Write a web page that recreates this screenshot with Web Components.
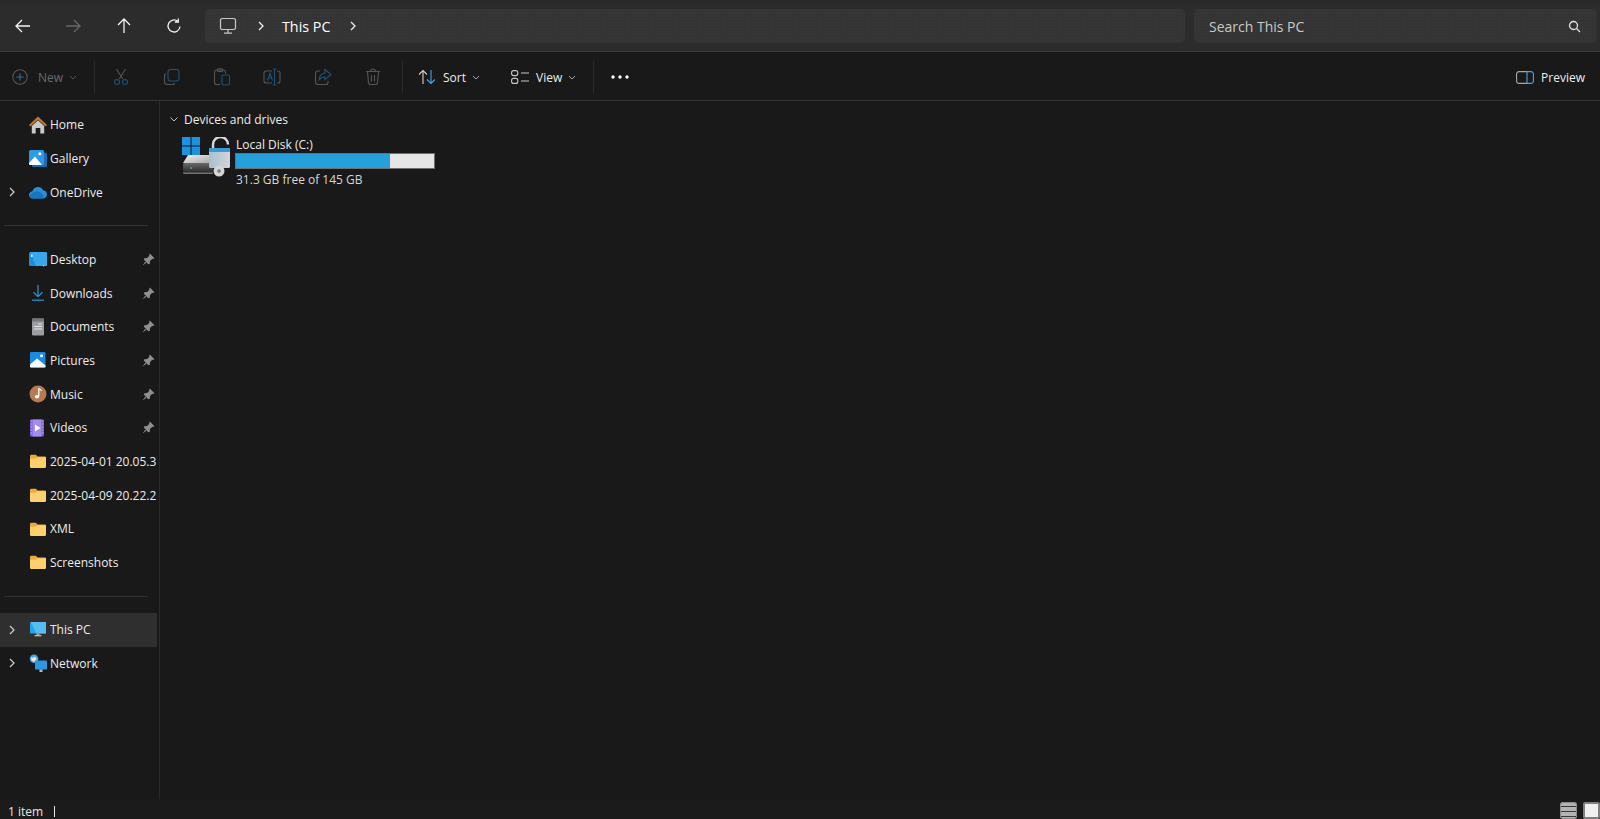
<!DOCTYPE html>
<html>
<head>
<meta charset="utf-8">
<title>This PC</title>
<style>
  html, body { margin: 0; height: 100%; background: #191919; overflow: hidden; }
  body { font-family: "Open Sans", "Noto Sans", sans-serif; color: #fff; }
</style>
</head>
<body>
<explorer-window>
  <explorer-addressbar slot="top"></explorer-addressbar>
  <explorer-toolbar slot="tools"></explorer-toolbar>
  <explorer-sidebar slot="side">
    <nav-item icon="home">Home</nav-item>
    <nav-item icon="gallery">Gallery</nav-item>
    <nav-item icon="onedrive" expand>OneDrive</nav-item>
    <nav-divider></nav-divider>
    <nav-item icon="desktop" pin>Desktop</nav-item>
    <nav-item icon="downloads" pin>Downloads</nav-item>
    <nav-item icon="documents" pin>Documents</nav-item>
    <nav-item icon="pictures" pin>Pictures</nav-item>
    <nav-item icon="music" pin>Music</nav-item>
    <nav-item icon="videos" pin>Videos</nav-item>
    <nav-item icon="folder">2025-04-01 20.05.3</nav-item>
    <nav-item icon="folder">2025-04-09 20.22.2</nav-item>
    <nav-item icon="folder">XML</nav-item>
    <nav-item icon="folder">Screenshots</nav-item>
    <nav-divider></nav-divider>
    <nav-item icon="pc" expand selected>This PC</nav-item>
    <nav-item icon="network" expand>Network</nav-item>
  </explorer-sidebar>
  <drive-list slot="main">
    <drive-tile name="Local Disk (C:)" free="31.3 GB free of 145 GB" used="78"></drive-tile>
  </drive-list>
  <explorer-status slot="status"></explorer-status>
</explorer-window>

<script>
const NAV_ICONS = {
  home: `<path d="M9 .5 0 9l1.300 1.500L9 3.500l7.700 7L18 9z" fill="#c87a2c"/><path d="M2.800 10 9 4.200l6.200 5.800v7.500h-3.900v-5.500H6.700v5.500H2.800z" fill="#c9c9c9"/>`,
  gallery: `<rect x="3" y="3.500" width="15" height="14.500" rx="1.500" fill="#1b6cb5"/><rect x="0" y="1" width="15" height="15" rx="1.500" fill="#2b9be8"/><path d="M0 14l6-6.500 7 8.500H1.500A1.500 1.500 0 0 1 0 14.500z" fill="#fff"/><circle cx="10.800" cy="4.800" r="1.500" fill="#fff"/>`,
  onedrive: `<path d="M4.200 15.500C1.500 15.500 0 13.700 0 12c0-1.900 1.400-3.300 3.200-3.500C4 5.800 6.300 4 9 4c2.300 0 4.100 1.200 5 3.200 2.300.2 4 1.900 4 4.100 0 2.400-1.800 4.200-4.200 4.200z" fill="#2b8fd8"/><path d="M5 9c2-1.200 5-1.200 7 1l2 1.800c1 .9.500 3.700-.2 3.700H4.200c-2 0-3.200-.8-3.800-2C1.500 11 3 10 5 9z" fill="#1a73bd"/>`,
  desktop: `<rect x="0" y="2" width="18" height="14" rx="1.500" fill="#1f8fdc"/><path d="M1.500 2H16.500A1.500 1.500 0 0 1 18 3.500V16H7z" fill="#37a8ec"/><rect x="2" y="4.500" width="1.500" height="2.500" fill="#dff2ff"/><rect x="14" y="15" width="1" height="1.500" fill="#bbb"/>`,
  downloads: `<path d="M9 1v11.500M4.500 8.200 9 12.700l4.500-4.500" fill="none" stroke="#2a8ed0" stroke-width="1.300"/><path d="M3 16.200h12" stroke="#2a8ed0" stroke-width="1.300"/>`,
  documents: `<rect x="3" y="0.500" width="12" height="17" rx="1.200" fill="#9a9da2"/><path d="M3 4.500a1 1 0 0 1 1-1h10a1 1 0 0 1 1 1v-3a1 1 0 0 0-1-1H4a1 1 0 0 0-1 1z" fill="#777"/><path d="M9 6h4M5 8.500h8M5 11h8" stroke="#e8e8e8" stroke-width="1"/>`,
  pictures: `<rect x="1" y="1" width="15.500" height="15.500" rx="1.300" fill="#1d8ae0"/><path d="M1 13.500 8 7.500l8.500 7v.8a1.200 1.200 0 0 1-1.200 1.200H2.200A1.200 1.200 0 0 1 1 15.300z" fill="#fff"/><circle cx="12.500" cy="4.800" r="1.500" fill="#fff"/>`,
  music: `<circle cx="9" cy="9" r="8.500" fill="#b67a52"/><path d="M9.800 3.500v7.800" stroke="#fff" stroke-width="1.300"/><path d="M9.800 3.500c1.500.4 2.400 1.200 2.500 2.500" stroke="#fff" stroke-width="1.200" fill="none"/><ellipse cx="8" cy="11.700" rx="2.200" ry="1.800" fill="#fff"/>`,
  videos: `<rect x="1" y="0.500" width="14" height="17" rx="1" fill="#7a5cd6"/><rect x="3.500" y="0.500" width="9" height="17" fill="#a48cec"/><path d="M6 5.500 11.500 9 6 12.500z" fill="#fff"/><path d="M1.800 2h1M1.800 5h1M1.800 8h1M1.800 11h1M1.800 14h1M13.200 2h1M13.200 5h1M13.200 8h1M13.200 11h1M13.200 14h1" stroke="#ddd" stroke-width="1"/>`,
  folder: `<path d="M1 4a1.300 1.300 0 0 1 1.300-1.300h4.500L8.500 4.500h7.200A1.300 1.300 0 0 1 17 5.800V8H1z" fill="#eda93a"/><path d="M1 6.800 7 6.500l1.500-1.200h8.500V14.700a1.300 1.300 0 0 1-1.300 1.300H2.300A1.300 1.300 0 0 1 1 14.700z" fill="#fdd06f"/>`,
  pc: `<rect x="1" y="1" width="16" height="11.500" rx="1" fill="#27a3e8"/><path d="M2 1h14a1 1 0 0 1 1 1v10.500H7z" fill="#55bdf2"/><path d="M7.500 12.500h3v2h-3z" fill="#9aa0a6"/><path d="M5.500 14.700h7" stroke="#c8c8c8" stroke-width="1.200"/>`,
  network: `<circle cx="5" cy="4.800" r="4.300" fill="#4aa3d8"/><path d="M2 3c1.500 1 3 .8 4-.5L7.800 5 5 8 2.500 6.500z" fill="#e6e6e6"/><rect x="6" y="6.500" width="12" height="9" rx="1" fill="#2a9ae0"/><path d="M10.500 15.500h3V18h-3z" fill="#b9bec4"/>`
};

class ExplorerWindow extends HTMLElement {
  constructor() {
    super();
    this.attachShadow({ mode: "open" }).innerHTML = `
      <style>
        :host { display: flex; flex-direction: column; width: 1600px; height: 819px; overflow: hidden; }
        .body { flex: 1; display: flex; min-height: 0; }
        ::slotted([slot="main"]) { flex: 1; }
      </style>
      <slot name="top"></slot>
      <slot name="tools"></slot>
      <div class="body"><slot name="side"></slot><slot name="main"></slot></div>
      <slot name="status"></slot>`;
  }
}

class ExplorerAddressbar extends HTMLElement {
  constructor() {
    super();
    this.attachShadow({ mode: "open" }).innerHTML = `
      <style>
        :host { display: flex; align-items: center; height: 50px; padding: 1px 3px 0 0; border-bottom: 1px solid #3c3c3c;
          background: linear-gradient(#272727, #2c2c2c 12%, #2c2c2c); }
        .nav { display: grid; grid-template-columns: repeat(4, 50.3px); width: 205px; box-sizing: border-box; justify-items: center; margin-left: -2px; margin-right: 2px; }
        svg { display: block; }
        .field { height: 34px; border-radius: 5px; display: flex; align-items: center; box-sizing: border-box;
          background-color: #343434;
          background-image: radial-gradient(circle, #3b3b3b 0.6px, transparent 0.8px); background-size: 3px 3px; }
        .path { flex: 1; padding-left: 14px; margin-right: 9px; }
        .search { width: 403px; padding: 0 16px 0 15px; justify-content: space-between; color: #c9c9c9; }
        .crumb { font-size: 14.300px; color: #fff; margin: 0 19px 0 17px; }
      </style>
      <div class="nav">
        <svg width="18" height="18" viewBox="0 0 18 18" fill="none" stroke="#f2f2f2" stroke-width="1.300"><path d="M16 9H2.500M8 3 2 9l6 6"/></svg>
        <svg width="18" height="18" viewBox="0 0 18 18" fill="none" stroke="#686868" stroke-width="1.300"><path d="M2 9h13.500M10 3l6 6-6 6"/></svg>
        <svg width="18" height="18" viewBox="0 0 18 18" fill="none" stroke="#f2f2f2" stroke-width="1.300"><path d="M9 16V2.500M3 8l6-6 6 6"/></svg>
        <svg width="18" height="18" viewBox="0 0 18 18" fill="none" stroke="#f2f2f2" stroke-width="1.300"><path d="M15 9.500A6 6 0 1 1 12.800 4.300M13.300 1.500v3.500H9.800"/></svg>
      </div>
      <div class="field path">
        <svg width="18" height="18" viewBox="0 0 18 18" fill="none" stroke="#c8c8c8" stroke-width="1.200"><rect x="1.500" y="1.500" width="15" height="11" rx="1.800"/><path d="M9 12.500v3.500M5 16.200h8"/></svg>
        <svg style="margin-left:20px" width="8" height="10" viewBox="0 0 8 10" fill="none" stroke="#eee" stroke-width="1.300"><path d="M2 1l4 4-4 4"/></svg>
        <span class="crumb">This PC</span>
        <svg width="8" height="10" viewBox="0 0 8 10" fill="none" stroke="#eee" stroke-width="1.300"><path d="M2 1l4 4-4 4"/></svg>
      </div>
      <div class="field search">
        <span style="font-size:14px">Search This PC</span>
        <svg width="13" height="13" viewBox="0 0 13 13" fill="none" stroke="#e0e0e0" stroke-width="1.300"><circle cx="5.500" cy="5.500" r="4"/><path d="M8.500 8.500l3.500 3.500"/></svg>
      </div>`;
  }
}

class ExplorerToolbar extends HTMLElement {
  constructor() {
    super();
    const g = "#555", b = "#1f5279";
    const chev = c => `<svg class="chev" width="8" height="5" viewBox="0 0 8 5" fill="none" stroke="${c}" stroke-width="1"><path d="M1 1l3 3 3-3"/></svg>`;
    this.attachShadow({ mode: "open" }).innerHTML = `
      <style>
        :host { display: flex; align-items: center; height: 46px; padding-top: 2px; background: #191919; border-bottom: 1px solid #363636; font-size: 12px; color: #ececec; }
        svg { display: block; flex: none; }
        .sep { width: 1px; height: 32px; background: #2a2a2a; flex: none; }
        .btn { display: flex; align-items: center; }
        .icons { display: grid; grid-template-columns: repeat(6, 50.400px); justify-items: center; width: 307px; padding-left: 1px; box-sizing: border-box; }
        .dim { color: #6a6a6a; }
        .spring { flex: 1; }
      </style>
      <div class="btn dim" style="padding-left:12px;box-sizing:border-box;width:94px">
        <svg width="16" height="16" viewBox="0 0 16 16" fill="none" stroke="${g}" stroke-width="1.100"><circle cx="8" cy="8" r="7.200"/><path d="M8 4.500v7M4.500 8h7" stroke="#2a6ea3"/></svg>
        <span style="margin:0 6px 0 10px">New</span>${chev(g)}
      </div>
      <div class="sep"></div>
      <div class="icons">
        <svg width="18" height="18" viewBox="0 0 18 18" fill="none" stroke="${g}" stroke-width="1.100"><path d="M4.500 1 10.800 11M13.500 1 7.200 11"/><circle cx="5" cy="14" r="2.500" stroke="${b}"/><circle cx="13" cy="14" r="2.500" stroke="${b}"/></svg>
        <svg width="18" height="18" viewBox="0 0 18 18" fill="none" stroke-width="1.100"><path d="M3 5.500A2 2 0 0 0 1.500 7.500v6a3 3 0 0 0 3 3h5a2 2 0 0 0 2-1.500" stroke="${g}"/><rect x="5" y="1.500" width="11" height="11.500" rx="2.500" stroke="${b}"/></svg>
        <svg width="18" height="18" viewBox="0 0 18 18" fill="none" stroke-width="1.100"><path d="M7 16.500H3.500a2 2 0 0 1-2-2V4a2 2 0 0 1 2-2h7a2 2 0 0 1 2 2v1.500" stroke="${g}"/><rect x="4.500" y="0.700" width="5" height="2.800" rx="1" stroke="${g}"/><rect x="9" y="7" width="7.500" height="10" rx="1.500" stroke="${b}"/></svg>
        <svg width="18" height="18" viewBox="0 0 18 18" fill="none" stroke-width="1.100"><path d="M9 3H3a2 2 0 0 0-2 2v8a2 2 0 0 0 2 2h6M14 3h1a2 2 0 0 1 2 2v8a2 2 0 0 1-2 2h-1" stroke="${g}"/><path d="M11.500 1v16M9.800 1h3.400M9.800 17h3.400M4.500 12.500 7 5.500 9.500 12.500M5.500 10h3" stroke="${b}"/></svg>
        <svg width="18" height="18" viewBox="0 0 18 18" fill="none" stroke-width="1.100"><path d="M6 3H3.500a2 2 0 0 0-2 2v9a2.500 2.500 0 0 0 2.500 2.500h8a2 2 0 0 0 2-2v-1.500" stroke="${g}"/><path d="M11 1.500 17 6.500l-6 5V9c-3 0-4.500 1-6 3 .3-4 2.500-6.500 6-7z" stroke="${b}"/></svg>
        <svg width="16" height="18" viewBox="0 0 16 18" fill="none" stroke="${g}" stroke-width="1.100"><path d="M1 3.500h14M5.500 3.500a2.500 2.500 0 0 1 5 0M2.500 3.500l1 11.500a2 2 0 0 0 2 1.500h5a2 2 0 0 0 2-1.500l1-11.500M6.500 7v6.500M9.500 7v6.500"/></svg>
      </div>
      <div class="sep"></div>
      <div class="btn" style="margin-left:15px">
        <svg width="18" height="16" viewBox="0 0 18 16" fill="none" stroke-width="1.100"><path d="M5 15V1.500M1 5.500l4-4 4 4" stroke="#d0d0d0"/><path d="M13 1v13.500M9 10.500l4 4 4-4" stroke="#45a5e8"/></svg>
        <span style="margin:0 6px 0 7px">Sort</span>${chev("#a0a0a0")}
      </div>
      <div class="btn" style="margin-left:31px">
        <svg width="18" height="14" viewBox="0 0 18 14" fill="none" stroke="#c8c8c8" stroke-width="1.100"><rect x="0.600" y="0.600" width="6.200" height="5" rx="2"/><rect x="0.600" y="8.400" width="6.200" height="5" rx="2"/><path d="M10 3h8M10 11h8"/></svg>
        <span style="margin:0 6px 0 7px">View</span>${chev("#a0a0a0")}
      </div>
      <div class="sep" style="margin-left:17px"></div>
      <svg style="margin-left:17px" width="18" height="4" viewBox="0 0 18 4" fill="#fff"><circle cx="2" cy="2" r="1.700"/><circle cx="9" cy="2" r="1.700"/><circle cx="16" cy="2" r="1.700"/></svg>
      <div class="spring"></div>
      <div class="btn" style="margin-right:15px">
        <svg width="18" height="13" viewBox="0 0 18 13" fill="none" stroke-width="1.100"><path d="M11 .6H3A2.400 2.400 0 0 0 .6 3v7A2.400 2.400 0 0 0 3 12.400h8" stroke="#a8a8a8"/><path d="M11 .6h4A2.400 2.400 0 0 1 17.400 3v7a2.400 2.400 0 0 1-2.400 2.400h-4z" stroke="#45a5e8"/></svg>
        <span style="margin-left:7px">Preview</span>
      </div>`;
  }
}

class ExplorerSidebar extends HTMLElement {
  constructor() {
    super();
    this.attachShadow({ mode: "open" }).innerHTML = `
      <style>
        :host { display: block; flex: none; width: 160px; box-sizing: border-box; padding: 7px 2px 0 0; border-right: 1px solid #2b2b2b; }
      </style>
      <slot></slot>`;
  }
}

class NavItem extends HTMLElement {
  constructor() {
    super();
    const icon = NAV_ICONS[this.getAttribute("icon")] || "";
    const expand = this.hasAttribute("expand");
    const pin = this.hasAttribute("pin");
    this.attachShadow({ mode: "open" }).innerHTML = `
      <style>
        :host { display: flex; align-items: center; height: 33.670px; font-size: 12px; color: #ececec; overflow: hidden; white-space: nowrap; }
        :host([selected]) { background: #2f2f2f; }
        .exp { width: 29px; flex: none; display: flex; justify-content: center; padding-right: 6px; box-sizing: border-box; }
        svg { display: block; flex: none; }
        .label { flex: 1; min-width: 0; margin-left: 3px; overflow: hidden; }
        .pin { margin-right: 2px; }
      </style>
      <span class="exp">${expand ? `<svg width="8" height="10" viewBox="0 0 8 10" fill="none" stroke="#c8c8c8" stroke-width="1.300"><path d="M2 1l4 4-4 4"/></svg>` : ""}</span>
      <svg width="18" height="18" viewBox="0 0 18 18">${icon}</svg>
      <span class="label"><slot></slot></span>
      ${pin ? `<svg class="pin" width="13" height="13" viewBox="0 0 12 12" fill="#8f8f8f"><path d="M7.200 .5 11.500 4.800 10.300 5.500 9.500 5.300 7.400 7.400 7.200 10 5.800 10.300 1.800 6.300 2.100 4.900 4.700 4.700 6.800 2.600 6.600 1.800z"/><path d="M3 8 .5 11.500 4 9z"/></svg>` : ""}`;
  }
}

class NavDivider extends HTMLElement {
  constructor() {
    super();
    this.attachShadow({ mode: "open" }).innerHTML = `
      <style>
        :host { display: flex; align-items: center; height: 33.670px; padding: 0 9px 0 4px; }
        div { height: 1px; width: 100%; background: #323232; }
      </style>
      <div></div>`;
  }
}

class DriveList extends HTMLElement {
  constructor() {
    super();
    this.attachShadow({ mode: "open" }).innerHTML = `
      <style>
        :host { display: block; padding: 9px 0 0 10px; font-size: 12px; color: #ececec; }
        header { display: flex; align-items: center; height: 18px; gap: 5px; }
        svg { display: block; }
      </style>
      <header>
        <svg width="8" height="5" viewBox="0 0 8 5" fill="none" stroke="#c0c0c0" stroke-width="1"><path d="M.5.500 4 4 7.500.5"/></svg>
        <span style="margin-left:1px">Devices and drives</span>
      </header>
      <slot></slot>`;
  }
}

class DriveTile extends HTMLElement {
  constructor() {
    super();
    const used = this.getAttribute("used");
    this.attachShadow({ mode: "open" }).innerHTML = `
      <style>
        :host { display: flex; padding: 8px 0 0 12px; gap: 3px; }
        svg { display: block; flex: none; margin-top: 1px; }
        .info { width: 200px; display: flex; flex-direction: column; }
        .name, .free { line-height: 17px; padding-left: 1px; white-space: nowrap; }
        .bar { height: 16px; background: #e6e6e6; border: 1px solid #6f6f6f; box-sizing: border-box; }
        .fill { height: 100%; background: #26a0da; }
        .free { margin-top: 2px; color: #d6d6d6; }
      </style>
      <svg width="50" height="40" viewBox="0 0 50 40">
        <defs>
          <linearGradient id="lk" x1="0" x2="1" y1="0" y2="0"><stop offset="0" stop-color="#a9c0d0"/><stop offset="1" stop-color="#d2d5d8"/></linearGradient>
          <linearGradient id="dr" x1="0" x2="0" y1="0" y2="1"><stop offset="0" stop-color="#6a6a6a"/><stop offset="0.8" stop-color="#2e2e2e"/><stop offset="1" stop-color="#8a8a8a"/></linearGradient>
          <linearGradient id="tp" x1="0" x2="1" y1="0" y2="1"><stop offset="0" stop-color="#f0f0f0"/><stop offset="1" stop-color="#a8a8a8"/></linearGradient>
        </defs>
        <path d="M6 18H30V26H1z" fill="url(#tp)"/>
        <rect x="1" y="26" width="30" height="11" rx="1.500" fill="url(#dr)"/>
        <circle cx="9" cy="31" r="1" fill="#4caf50"/>
        <path d="M0 0h8.500v8.500H0zM9.500 0H18v8.500H9.500zM0 9.500h8.500V18H0zM9.500 9.500H18V18H9.500z" fill="#1b93e2"/>
        <path d="M31 12V7.500a7.500 7.500 0 0 1 15 0" fill="none" stroke="#d5dadf" stroke-width="2.400"/>
        <rect x="27" y="11" width="21" height="20" rx="1.500" fill="url(#lk)"/>
        <rect x="27" y="11" width="21" height="4" rx="1" fill="#3a9ad6"/>
        <circle cx="37" cy="34" r="5.500" fill="#d5d5d5"/><circle cx="37" cy="34" r="1.800" fill="#777"/>
      </svg>
      <div class="info">
        <span class="name">${this.getAttribute("name")}</span>
        <div class="bar"><div class="fill" style="width:${used}%"></div></div>
        <span class="free">${this.getAttribute("free")}</span>
      </div>`;
  }
}

class ExplorerStatus extends HTMLElement {
  constructor() {
    super();
    this.attachShadow({ mode: "open" }).innerHTML = `
      <style>
        :host { display: flex; align-items: center; height: 20px; background: #1b1b1b; font-size: 12px; color: #e6e6e6; padding-left: 8px; }
        .txt { padding-top: 4px; }
        .caret { width: 1px; height: 11px; background: #e6e6e6; margin: 4px 0 0 11px; }
        .spring { flex: 1; }
        .view { width: 17px; height: 17px; box-sizing: border-box; border-radius: 2px; align-self: flex-end; }
        .detail { margin-right: 6px; background: #b3b3b3 repeating-linear-gradient(transparent 0 3px, #3a3a3a 3px 4px, transparent 4px 5px); background-clip: padding-box; border: 1px solid #8a8a8a; }
        .tile { background: #f0f0f0; border: 2px solid #808080; }
      </style>
      <span class="txt">1 item</span><span class="caret"></span>
      <span class="spring"></span>
      <div class="view detail"></div><div class="view tile"></div>`;
  }
}

customElements.define("explorer-window", ExplorerWindow);
customElements.define("explorer-addressbar", ExplorerAddressbar);
customElements.define("explorer-toolbar", ExplorerToolbar);
customElements.define("explorer-sidebar", ExplorerSidebar);
customElements.define("nav-item", NavItem);
customElements.define("nav-divider", NavDivider);
customElements.define("drive-list", DriveList);
customElements.define("drive-tile", DriveTile);
customElements.define("explorer-status", ExplorerStatus);
</script>
</body>
</html>
